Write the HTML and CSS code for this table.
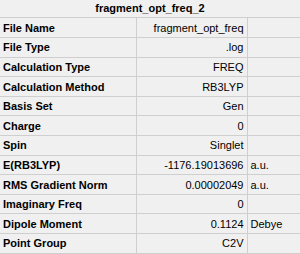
FILE: index.html
```html
<!DOCTYPE html>
<html>
<head>
<meta charset="utf-8">
<link rel="stylesheet" href="styles.css">
</head>
<body>
<div class="panel">
  <div class="title">fragment_opt_freq_2</div>
  <table class="props">
    <colgroup><col class="c-label"><col class="c-value"><col class="c-unit"></colgroup>
    <tr><th>File Name</th><td class="val">fragment_opt_freq</td><td class="unit"></td></tr>
    <tr><th>File Type</th><td class="val">.log</td><td class="unit"></td></tr>
    <tr><th>Calculation Type</th><td class="val">FREQ</td><td class="unit"></td></tr>
    <tr><th>Calculation Method</th><td class="val">RB3LYP</td><td class="unit"></td></tr>
    <tr><th>Basis Set</th><td class="val">Gen</td><td class="unit"></td></tr>
    <tr><th>Charge</th><td class="val">0</td><td class="unit"></td></tr>
    <tr><th>Spin</th><td class="val">Singlet</td><td class="unit"></td></tr>
    <tr><th>E(RB3LYP)</th><td class="val">-1176.19013696</td><td class="unit">a.u.</td></tr>
    <tr><th>RMS Gradient Norm</th><td class="val">0.00002049</td><td class="unit">a.u.</td></tr>
    <tr><th>Imaginary Freq</th><td class="val">0</td><td class="unit"></td></tr>
    <tr><th>Dipole Moment</th><td class="val">0.1124</td><td class="unit">Debye</td></tr>
    <tr><th>Point Group</th><td class="val">C2V</td><td class="unit"></td></tr>
  </table>
</div>
</body>
</html>
```
FILE: styles.css
```css
html, body {
  margin: 0;
  padding: 0;
  background: #f0f0f0;
}

.panel {
  width: 300px;
  height: 254px;
  overflow: hidden;
  background: #f0f0f0;
  font-family: "Liberation Sans", Arial, sans-serif;
  font-size: 11px;
  color: #000;
}

.title {
  height: 17px;
  line-height: 17px;
  text-align: center;
  font-weight: bold;
  border-bottom: 1px solid #cfcfcf;
}

.props {
  width: 300px;
  table-layout: fixed;
  border-collapse: collapse;
}

.c-label { width: 136px; }
.c-value { width: 111px; }
.c-unit { width: 53px; }

.props tr {
  height: 19.6px;
}

.props th,
.props td {
  padding: 0 3px;
  border-bottom: 1px solid #cfcfcf;
  border-right: 1px solid #cfcfcf;
  white-space: nowrap;
  overflow: hidden;
  vertical-align: middle;
}

.props th {
  text-align: left;
  font-weight: bold;
}

.props .val {
  text-align: right;
}

.props .unit {
  text-align: left;
  border-right: none;
}
```
